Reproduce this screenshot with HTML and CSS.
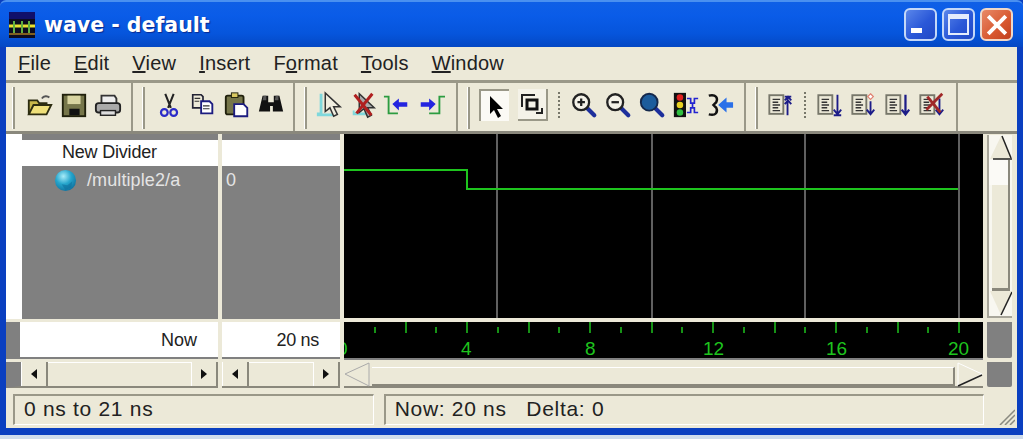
FILE: index.html
```html
<!DOCTYPE html>
<html lang="en">
<head>
    <meta charset="UTF-8">
    <title>wave - default</title>
    <link rel="stylesheet" href="styles.css">
</head>
<body>
    <svg class="defs" width="0" height="0">
        <symbol id="doc" viewBox="0 0 30 30">
            <rect x="2.5" y="4.5" width="15" height="20" fill="#ece9d8" stroke="#77776a" stroke-width="2"/>
            <path d="M6 9h8M6 12h6M6 15h8M6 18h6M6 21h8" stroke="#333" stroke-width="1.5"/>
        </symbol>
        <symbol id="lens" viewBox="0 0 30 30">
            <path d="M18 18l8 8" stroke="#1d2f9c" stroke-width="4.5" stroke-linecap="round"/>
            <circle cx="12" cy="12" r="8.5" fill="#f4f2e8" stroke="#222" stroke-width="2.5"/>
        </symbol>
        <radialGradient id="ballFill" cx="0.4" cy="0.3" r="0.75">
            <stop offset="0" stop-color="#a8ecf8"/>
            <stop offset="0.5" stop-color="#25a5cc"/>
            <stop offset="1" stop-color="#0f6f9c"/>
        </radialGradient>
    </svg>

    <div class="titlebar">
        <svg class="app-icon" viewBox="0 0 26 26">
            <rect width="26" height="26" fill="#0c0c20"/>
            <rect width="26" height="7" fill="#10106a"/>
            <path d="M0 14h26" stroke="#e8e030" stroke-width="3"/>
            <path d="M5 9v12M13 9v12M20 9v12" stroke="#60b040" stroke-width="2"/>
            <path d="M0 22h26" stroke="#806020" stroke-width="2"/>
        </svg>
        <span class="title-text">wave - default</span>
        <div class="caption-buttons">
            <div class="cap-btn"><span class="cap-min"></span></div>
            <div class="cap-btn"><span class="cap-max"></span></div>
            <div class="cap-btn cap-close">
                <svg viewBox="0 0 20 20" width="22" height="22"><path d="M2 2l16 16M18 2L2 18" stroke="#fff" stroke-width="3.5"/></svg>
            </div>
        </div>
    </div>

    <div class="client">
        <div class="menubar">
            <span><u>F</u>ile</span>
            <span><u>E</u>dit</span>
            <span><u>V</u>iew</span>
            <span><u>I</u>nsert</span>
            <span>F<u>o</u>rmat</span>
            <span><u>T</u>ools</span>
            <span><u>W</u>indow</span>
        </div>

        <div class="toolbar">
            <div class="band band-file">
                <svg class="ico" viewBox="0 0 30 30"><path d="M3 25V10h9l2 3h8v3" fill="#c8b84a" stroke="#2c2c10" stroke-width="2"/><path d="M3 25l5-10h19l-5 10z" fill="#efe07a" stroke="#2c2c10" stroke-width="2"/><path d="M17 8c2-3 6-3 8-1" fill="none" stroke="#555" stroke-width="2"/></svg>
                <svg class="ico" viewBox="0 0 30 30"><rect x="3" y="4" width="24" height="23" fill="#76764a" stroke="#20200c" stroke-width="2"/><rect x="8" y="5" width="14" height="9" fill="#d8d4a0"/><rect x="10" y="19" width="11" height="7" fill="#111"/></svg>
                <svg class="ico" viewBox="0 0 30 30"><path d="M8 13V5h14l2 3v5" fill="#eee" stroke="#333" stroke-width="2"/><rect x="2" y="13" width="26" height="10" rx="3" fill="#aaa" stroke="#222" stroke-width="2"/><rect x="7" y="21" width="16" height="5" fill="#ddd" stroke="#222" stroke-width="1.5"/></svg>
            </div>
            <div class="band band-edit">
                <svg class="ico" viewBox="0 0 30 30"><path d="M11 3l6 15M20 3l-6 15" stroke="#222" stroke-width="2.2"/><circle cx="10" cy="23" r="3.6" fill="none" stroke="#2a2ac8" stroke-width="2.4"/><circle cx="20" cy="23" r="3.6" fill="none" stroke="#2a2ac8" stroke-width="2.4"/></svg>
                <svg class="ico" viewBox="0 0 30 30"><path d="M4 4h9l2 2v12H4z" fill="#ece9d8" stroke="#223" stroke-width="1.8"/><path d="M13 11h9l3 3v10H13z" fill="#fff" stroke="#1c1c80" stroke-width="2"/><path d="M6 8h6M6 11h5M15 16h7M15 19h7" stroke="#333" stroke-width="1.3"/></svg>
                <svg class="ico" viewBox="0 0 30 30"><rect x="3" y="5" width="19" height="20" rx="2" fill="#76764a" stroke="#20200c" stroke-width="2"/><rect x="9" y="2" width="7" height="5" fill="#d8c860" stroke="#20200c"/><path d="M12 14h10l4 4v9H12z" fill="#fff" stroke="#1c1c80" stroke-width="2"/></svg>
                <svg class="ico" viewBox="0 0 30 30"><path d="M6 5h6v7h6V5h6l4 17h-11v-6h-3v6H2z" fill="#111"/><path d="M7 5h3v5H6zM20 5h3v5h-4z" fill="#555"/></svg>
            </div>
            <div class="band band-cursor">
                <svg class="ico" viewBox="0 0 30 30"><path d="M5 3v20h-3v4h18v-3H8V3z" fill="#7fd8dc"/><path d="M11 2v20l5-4 4 9 4-2-4-8h7z" fill="#f0eee0" stroke="#333" stroke-width="1.6"/></svg>
                <svg class="ico" viewBox="0 0 30 30"><path d="M4 21v5h14v-3H6v-2z" fill="#7fd8dc"/><path d="M11 3v20l5-4 4 9 4-2-4-8h7z" fill="#aaa" stroke="#333" stroke-width="1.6"/><path d="M6 4l18 22M25 3L8 24" stroke="#b02020" stroke-width="3.2"/></svg>
                <svg class="ico" viewBox="0 0 30 30"><path d="M1 6h5v18h10" fill="none" stroke="#2c9c40" stroke-width="2"/><path d="M10 14l7-6v4h9v5h-9v4z" fill="#2424e0"/></svg>
                <svg class="ico" viewBox="0 0 30 30"><path d="M30 6h-6v18H13" fill="none" stroke="#2c9c40" stroke-width="2"/><path d="M20 14l-7-6v4H4v5h9v4z" fill="#2424e0"/></svg>
            </div>
            <div class="band band-zoom">
                <div class="tool-btn tool-on">
                    <svg viewBox="0 0 24 24" width="24" height="24"><path d="M7 2v18l4-4 4 8 3-2-4-7h6z" fill="#000"/></svg>
                </div>
                <div class="tool-btn tool-raised">
                    <svg viewBox="0 0 24 24" width="24" height="24"><path d="M2 15V3h13" fill="none" stroke="#222" stroke-width="2"/><rect x="7" y="8" width="10" height="9" fill="none" stroke="#111" stroke-width="3"/><path d="M16 21h6v-5" fill="none" stroke="#222" stroke-width="2"/></svg>
                </div>
                <div class="sep sep-zoom"></div>
                <svg class="ico" viewBox="0 0 30 30"><use href="#lens" width="30" height="30"/><path d="M8 12h8M12 8v8" stroke="#222" stroke-width="2.4"/></svg>
                <svg class="ico" viewBox="0 0 30 30"><use href="#lens" width="30" height="30"/><path d="M8 12h8" stroke="#222" stroke-width="2.4"/></svg>
                <svg class="ico" viewBox="0 0 30 30"><path d="M18 18l8 8" stroke="#1d2f9c" stroke-width="4.5" stroke-linecap="round"/><circle cx="12" cy="12" r="9" fill="#1c5c9c" stroke="#14284c" stroke-width="2"/></svg>
                <svg class="ico" viewBox="0 0 30 30"><rect x="2" y="2" width="13" height="26" fill="#111"/><circle cx="8.5" cy="7" r="3.5" fill="#e02020"/><circle cx="8.5" cy="15" r="3.5" fill="#e8d020"/><circle cx="8.5" cy="23" r="3.5" fill="#30c040"/><path d="M16 8h4v5h4V8h4M16 23h4v-5h4v5h4M22 13v5" fill="none" stroke="#2424d0" stroke-width="1.8"/></svg>
                <svg class="ico" viewBox="0 0 30 30"><path d="M3 5c8-2 10 3 8 7l-3 3 3 3c2 4 0 9-8 7" fill="none" stroke="#111" stroke-width="2.6"/><path d="M13 15l9-8v5h7v6h-7v5z" fill="#2a70e8"/></svg>
            </div>
            <div class="band band-cursors">
                <svg class="ico doc-first" viewBox="0 0 30 30"><use href="#doc" width="30" height="30"/><path d="M22 26V5M19 6h7M19 10l3.500-4 3.500 4M19 14l3.500-4 3.500 4" fill="none" stroke="#1c1c88" stroke-width="2"/></svg>
                <div class="sep sep-cursors"></div>
                <svg class="ico" viewBox="0 0 30 30"><use href="#doc" width="30" height="30"/><path d="M23 4v21M19 26h8M19 20l4 5 4-5" fill="none" stroke="#1c1c88" stroke-width="2"/></svg>
                <svg class="ico" viewBox="0 0 30 30"><use href="#doc" width="30" height="30"/><path d="M22 11v14M18 20l4 5 4-5" fill="none" stroke="#1c1c88" stroke-width="2"/><path d="M22 3l3 3-3 3-3-3z" fill="#fff" stroke="#e08070" stroke-width="1.3"/></svg>
                <svg class="ico" viewBox="0 0 30 30"><use href="#doc" width="30" height="30"/><path d="M23 4v21M19 20l4 5 4-5" fill="none" stroke="#1c1c88" stroke-width="2.4"/></svg>
                <svg class="ico" viewBox="0 0 30 30"><use href="#doc" width="30" height="30"/><path d="M23 8v17M19 20l4 5 4-5" fill="none" stroke="#1c1c88" stroke-width="2"/><path d="M9 20L26 3M10 6l14 17" stroke="#a02828" stroke-width="3"/></svg>
            </div>
            <div class="band-rest"></div>
        </div>

        <div class="panes">
            <div class="names">
                <div class="row-divider">New Divider</div>
                <div class="row-signal">
                    <svg class="ball" viewBox="0 0 24 24"><circle cx="12" cy="12" r="11" fill="url(#ballFill)"/><path d="M8 16l6 1 5-4-1 6-6 3z" fill="#0f6f9c" opacity="0.6"/></svg>
                    <span>/multiple2/a</span>
                </div>
            </div>
            <div class="values">
                <div class="row-divider"></div>
                <div class="row-value">0</div>
            </div>
            <svg class="wave" viewBox="0 0 639 184" width="639" height="184">
                <path d="M153 0v184M308 0v184M461 0v184M615 0v184" stroke="#808080" stroke-width="1.500"/>
                <path d="M0 36h123v19h491" fill="none" stroke="#1ec41e" stroke-width="2"/>
            </svg>
            <div class="vscroll">
                <svg class="vs-btn" viewBox="0 0 23 25"><path d="M1 24L12 1h1l10 23z" fill="#ece9d8"/><path d="M13 1l9 22" stroke="#222" stroke-width="1.500"/><path d="M4 24h19" stroke="#222" stroke-width="1.500"/></svg>
                <div class="vs-track"></div>
                <div class="vs-thumb"></div>
                <svg class="vs-btn" viewBox="0 0 23 25"><path d="M1 0l11 24h1L23 0z" fill="#ece9d8"/><path d="M12 24L23 1" stroke="#222" stroke-width="1.500"/></svg>
            </div>

            <div class="now-name"><div class="now-cell">Now</div></div>
            <div class="now-value">20 ns</div>
            <svg class="ruler" viewBox="0 0 639 36" width="639" height="36">
                <path d="M62 0v11M123 0v11M185 0v11M246 0v11M308 0v11M369 0v11M431 0v11M492 0v11M554 0v11M615 0v11" stroke="#1ec41e" stroke-width="1.500"/>
                <path d="M31 5v6M92 5v6M154 5v6M215 5v6M277 5v6M338 5v6M400 5v6M461 5v6M523 5v6M584 5v6" stroke="#1ec41e" stroke-width="1.500"/>
                <text class="tick" x="-7" y="33">0</text>
                <text class="tick" x="117" y="33">4</text>
                <text class="tick" x="241" y="33">8</text>
                <text class="tick" x="359" y="33">12</text>
                <text class="tick" x="482" y="33">16</text>
                <text class="tick" x="604" y="33">20</text>
            </svg>
            <div class="corner"></div>

            <div class="hs hs-name">
                <div class="hs-btn"><span class="arr-l"></span></div>
                <div class="hs-track"></div>
                <div class="hs-btn"><span class="arr-r"></span></div>
            </div>
            <div class="hs hs-value">
                <div class="hs-btn"><span class="arr-l"></span></div>
                <div class="hs-track"></div>
                <div class="hs-btn"><span class="arr-r"></span></div>
            </div>
            <div class="hs hs-wave">
                <svg class="hs-tri" viewBox="0 0 26 25"><path d="M25 1L1 12l24 12z" fill="#ece9d8" stroke="#aaa"/></svg>
                <div class="hs-thumb"></div>
                <svg class="hs-tri" viewBox="0 0 26 25"><path d="M1 1l24 11L1 24z" fill="#ece9d8" stroke="#fff"/><path d="M1 24l24-11" stroke="#222" stroke-width="1.500"/></svg>
            </div>
            <div class="corner"></div>
        </div>

        <div class="statusbar">
            <div class="status status-range">0 ns to 21 ns</div>
            <div class="status status-now">Now: 20 ns&nbsp;&nbsp; Delta: 0</div>
            <svg class="grip" viewBox="0 0 16 16" width="16" height="16"><path d="M16 1L1 16M16 6L6 16M16 11l-5 5" stroke="#8a8a80" stroke-width="1.500"/></svg>
        </div>
    </div>
</body>
</html>
```

FILE: styles.css
```css
body {
    margin: 0;
    width: 1023px;
    height: 439px;
    box-sizing: border-box;
    overflow: hidden;
    background-color: #0a3fc0;
    border-bottom: 4px solid #cfdcec;
    font-family: "Liberation Sans", Arial, sans-serif;
    color: #222;
}

.defs {
    position: absolute;
}

/* title bar */
.titlebar {
    height: 47px;
    box-sizing: border-box;
    padding-left: 9px;
    display: flex;
    align-items: center;
    border-top: 2px solid #4a90f0;
    border-radius: 6px 6px 0 0;
    background: linear-gradient(#0f5fe6, #0a5ce8 30%, #0655dc 70%, #0448c4);
}

.app-icon {
    width: 26px;
    height: 26px;
}

.title-text {
    margin-left: 9px;
    font-family: "DejaVu Sans", Verdana, sans-serif;
    font-weight: bold;
    font-size: 20.5px;
    color: #fff;
    text-shadow: 1px 1px 1px #0a2a90;
}

.caption-buttons {
    margin-left: auto;
    margin-right: 10px;
    display: flex;
    gap: 5px;
}

.cap-btn {
    width: 33px;
    height: 33px;
    box-sizing: border-box;
    border: 2px solid #c4d8f8;
    border-radius: 6px;
    background: linear-gradient(135deg, #5a86ea, #2a58d8 55%, #2048c4);
    display: flex;
    align-items: center;
    justify-content: center;
}

.cap-close {
    background: linear-gradient(135deg, #e88a68, #d85830 60%, #c04020);
    border-color: #f0d8c8;
}

.cap-min {
    width: 11px;
    height: 5px;
    background-color: #fff;
    margin: 12px 8px 0 0;
}

.cap-max {
    width: 17px;
    height: 14px;
    border: 2px solid #e4ecfc;
    border-top-width: 5px;
}

/* menu */
.client {
    height: 381px;
    margin: 0 6px;
    background-color: #ece9d8;
    display: flex;
    flex-direction: column;
}

.menubar {
    height: 33px;
    flex: none;
    padding-left: 12px;
    display: flex;
    align-items: center;
    gap: 23px;
    font-size: 20px;
    letter-spacing: 0.2px;
    box-sizing: border-box;
}

/* toolbar */
.toolbar {
    height: 54px;
    flex: none;
    display: flex;
    gap: 3px;
    box-sizing: border-box;
    border-top: 3px solid #9a9888;
    border-bottom: 3px solid #8a887c;
}

.band {
    position: relative;
    display: flex;
    align-items: center;
    box-sizing: border-box;
    padding-bottom: 5px;
    border-right: 2px solid #9a9888;
}

/* grip at the start of every band */
.band::before {
    content: "";
    position: absolute;
    left: 6px;
    top: 4px;
    bottom: 2px;
    width: 3px;
    border-left: 1px solid #fff;
    border-right: 2px solid #9a9888;
    box-sizing: border-box;
}

.band-file {
    width: 127px;
    padding-left: 17px;
}

.band-edit {
    width: 159px;
    padding-left: 16px;
}

.band-cursor {
    width: 160px;
    padding-left: 14px;
}

.band-zoom {
    width: 285px;
    padding-left: 18px;
}

.band-cursors {
    width: 209px;
    padding-left: 18px;
}

.band-rest {
    flex: 1;
}

.ico {
    width: 28px;
    height: 28px;
    margin: 0 3px;
    flex: none;
}

.doc-first {
    margin: 0;
}

.tool-btn {
    width: 30px;
    height: 32px;
    box-sizing: border-box;
    display: flex;
    align-items: center;
    justify-content: center;
}

.tool-on {
    background-color: #fbfaf5;
    border-top: 2px solid #9a9888;
    border-left: 2px solid #9a9888;
}

.tool-raised {
    margin-left: 9px;
    background-color: #f4f2e8;
    border-right: 2px solid #9a9888;
    border-bottom: 2px solid #9a9888;
}

.sep {
    width: 2px;
    height: 26px;
    flex: none;
    background-image: repeating-linear-gradient(#77776a 0 2px, transparent 2px 4px);
}

.sep-zoom {
    margin: 0 7px 0 10px;
}

.sep-cursors {
    margin: 0 7px 0 9px;
}

/* panes */
.panes {
    display: grid;
    grid-template-columns: 212px 118px 639px 25px;
    grid-template-rows: 185px 40px 29px;
    column-gap: 4px;
    flex: none;
}

.names,
.values {
    background-color: #808080;
    padding-top: 6px;
}

.names {
    border-left: 16px solid #fff;
}

.wave {
    display: block;
    background-color: #000;
}

.row-divider {
    height: 26px;
    line-height: 24px;
    background-color: #fff;
    font-size: 18px;
    letter-spacing: -0.2px;
    padding-left: 40px;
}

.values .row-divider {
    padding: 0;
}

.row-signal {
    height: 28px;
    display: flex;
    align-items: center;
    padding-left: 32px;
    color: #e4e4e4;
    font-size: 18px;
    letter-spacing: 0.1px;
}

.row-signal span {
    margin-left: 10px;
}

.ball {
    width: 23px;
    height: 23px;
    flex: none;
}

.row-value {
    height: 28px;
    line-height: 28px;
    padding-left: 4px;
    color: #e4e4e4;
    font-size: 18px;
}

/* vertical scroll bar next to the waves */
.vscroll {
    display: flex;
    flex-direction: column;
    height: 183px;
    margin-top: 1px;
    box-sizing: border-box;
    border-left: 2px solid #a8a69a;
    border-bottom: 2px solid #a8a69a;
    background-color: #f8f7f0;
}

.vs-btn {
    width: 23px;
    height: 25px;
    flex: none;
    background-color: #f8f7f0;
}

.vs-track {
    height: 25px;
    box-sizing: border-box;
    margin-right: 2px;
    border-right: 2px solid #8a887c;
    background-color: #fbfaf6;
}

.vs-thumb {
    flex: 1;
    box-sizing: border-box;
    margin: 0 2px 0 3px;
    background-color: #ece9d8;
    border-right: 2px solid #8a887c;
    border-bottom: 3px solid #8a887c;
}

.now-name {
    border-left: 14px solid #808080;
    border-bottom: 2px solid #808080;
    background-color: #fff;
    margin-top: 3px;
}

.now-cell,
.now-value {
    font-size: 18px;
    text-align: right;
    line-height: 36px;
}

.now-cell {
    padding-right: 21px;
}

.now-value {
    background-color: #fff;
    margin-top: 3px;
    border-bottom: 2px solid #808080;
    padding-right: 21px;
    letter-spacing: -0.3px;
}

.ruler {
    display: block;
    margin-top: 3px;
    background-color: #000;
    border-bottom: 2px solid #808080;
}

.tick {
    font-family: "Liberation Sans", Arial, sans-serif;
    font-size: 19px;
    fill: #1ec41e;
}

.corner {
    background-color: #808080;
    margin: 3px 0 1px 0;
    border-radius: 0 0 2px 2px;
}

.hs {
    display: flex;
    margin-top: 3px;
    box-sizing: border-box;
    border-bottom: 2px solid #8a887c;
}

.hs-name {
    border-left: 15px solid #808080;
}

.hs-btn {
    width: 27px;
    flex: none;
    box-sizing: border-box;
    background-color: #ece9d8;
    border-left: 1px solid #fff;
    border-right: 2px solid #8a887c;
    display: flex;
    align-items: center;
    justify-content: center;
}

.hs-track {
    flex: 1;
    background-color: #ece9d8;
    border-top: 1px solid #fff;
}

.arr-l,
.arr-r {
    width: 0;
    height: 0;
    border-top: 5px solid transparent;
    border-bottom: 5px solid transparent;
}

.arr-l {
    border-right: 6px solid #111;
}

.arr-r {
    border-left: 6px solid #111;
}

.hs-tri {
    width: 26px;
    height: 25px;
    flex: none;
}

.hs-thumb {
    flex: 1;
    margin: 5px 2px 0;
    background-color: #ece9d8;
    border-top: 1px solid #fff;
    border-right: 2px solid #8a887c;
    border-bottom: 2px solid #8a887c;
}

/* status bar */
.statusbar {
    flex: 1;
    display: flex;
    align-items: flex-end;
    padding: 6px 2px 3px 7px;
    gap: 10px;
}

.status {
    height: 100%;
    box-sizing: border-box;
    border-top: 2px solid #9a9888;
    border-left: 2px solid #9a9888;
    border-bottom: 1px solid #fff;
    border-right: 1px solid #fff;
    font-size: 21px;
    letter-spacing: 0.7px;
    padding-left: 9px;
    line-height: 26px;
}

.status-range {
    width: 361px;
}

.status-now {
    width: 601px;
}

.grip {
    margin-left: 5px;
}
```
